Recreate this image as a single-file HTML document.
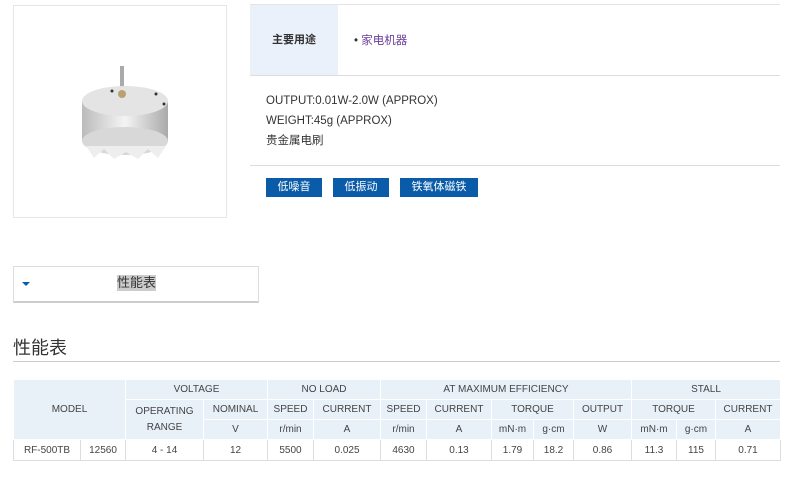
<!DOCTYPE html>
<html><head><meta charset="utf-8"><style>
*{margin:0;padding:0;box-sizing:border-box}
body{width:800px;height:490px;background:#fff;font-family:"Liberation Sans","Noto Sans CJK SC",sans-serif;color:#333;position:relative;overflow:hidden}
.a{position:absolute}
.imgbox{left:13px;top:5px;width:214px;height:213px;border:1px solid #e6e6e6}
.btn{position:absolute;top:178px;height:19px;background:#0a5ba8;color:#fff;font-size:11px;line-height:19px;text-align:center}
table{position:absolute;left:13px;top:379px;border-collapse:collapse;table-layout:fixed;font-size:10px;color:#444}
td{text-align:center;height:20px;border:1px solid #fff;background:#e8f0f8;padding:0}
tr.b td{background:#fff;border:1px solid #ddd;border-top:1px solid #fff;height:21px}
</style></head><body>
<div class="a imgbox">
<svg width="214" height="213" viewBox="0 0 214 213">
<defs><linearGradient id="g"><stop offset="0" stop-color="#bbb"/><stop offset=".5" stop-color="#f4f4f4"/><stop offset="1" stop-color="#aaa"/></linearGradient></defs>
<rect x="106" y="60" width="4" height="30" fill="#aaa"/>
<rect x="68" y="95" width="86" height="40" fill="url(#g)"/>
<ellipse cx="111" cy="135" rx="43" ry="14" fill="#d8d8d8"/>
<path d="M72 140 L80 152 L90 143 L100 153 L112 146 L124 153 L134 143 L144 152 L152 140 Z" fill="#eee"/>
<ellipse cx="111" cy="95" rx="43" ry="15" fill="#e4e4e4"/>
<circle cx="108" cy="88" r="4" fill="#b9a070"/>
<circle cx="98" cy="85" r="1.5" fill="#333"/><circle cx="142" cy="88" r="1.5" fill="#333"/><circle cx="150" cy="98" r="1.5" fill="#333"/>
</svg></div>
<div class="a" style="left:250px;top:4px;width:530px;border-top:1px solid #e4e4e4"></div>
<div class="a" style="left:250px;top:5px;width:88px;height:70px;background:#eaf1fa;font-size:11px;font-weight:bold;line-height:70px;text-align:center">主要用途</div>
<div class="a" style="left:354px;top:32px;font-size:11.5px;color:#6a3d9a"><span style="color:#333">•</span> 家电机器</div>
<div class="a" style="left:250px;top:75px;width:530px;border-top:1px solid #ddd"></div>
<div class="a" style="left:266px;top:91px;font-size:11.5px;line-height:20px">OUTPUT:0.01W-2.0W (APPROX)<br>WEIGHT:45g (APPROX)<br>贵金属电刷</div>
<div class="a" style="left:250px;top:165px;width:530px;border-top:1px solid #ddd"></div>
<div class="btn" style="left:266px;width:56px">低噪音</div>
<div class="btn" style="left:333px;width:56px">低振动</div>
<div class="btn" style="left:400px;width:78px">铁氧体磁铁</div>
<div class="a" style="left:13px;top:266px;width:246px;height:37px;border:1px solid #ddd;border-bottom:2px solid #ccc"></div>
<div class="a" style="left:22px;top:282px;width:0;height:0;border-left:4px solid transparent;border-right:4px solid transparent;border-top:4px solid #0a5ba8"></div>
<div class="a" style="left:117px;top:275px;font-size:13px;background:#ccc;line-height:16px">性能表</div>
<div class="a" style="left:13px;top:334px;font-size:18px;color:#333">性能表</div>
<div class="a" style="left:13px;top:361px;width:767px;border-top:1px solid #ccc"></div>
<table>
<colgroup><col style="width:67px"><col style="width:45px"><col style="width:78px"><col style="width:64px"><col style="width:46px"><col style="width:67px"><col style="width:46px"><col style="width:65px"><col style="width:42px"><col style="width:40px"><col style="width:58px"><col style="width:45px"><col style="width:39px"><col style="width:65px"></colgroup>
<tr><td colspan="2" rowspan="3">MODEL</td><td colspan="2">VOLTAGE</td><td colspan="2">NO LOAD</td><td colspan="5">AT MAXIMUM EFFICIENCY</td><td colspan="3">STALL</td></tr>
<tr><td rowspan="2" style="line-height:16px">OPERATING<br>RANGE</td><td>NOMINAL</td><td>SPEED</td><td>CURRENT</td><td>SPEED</td><td>CURRENT</td><td colspan="2">TORQUE</td><td>OUTPUT</td><td colspan="2">TORQUE</td><td>CURRENT</td></tr>
<tr><td>V</td><td>r/min</td><td>A</td><td>r/min</td><td>A</td><td>mN·m</td><td>g·cm</td><td>W</td><td>mN·m</td><td>g·cm</td><td>A</td></tr>
<tr class="b"><td>RF-500TB</td><td>12560</td><td>4 - 14</td><td>12</td><td>5500</td><td>0.025</td><td>4630</td><td>0.13</td><td>1.79</td><td>18.2</td><td>0.86</td><td>11.3</td><td>115</td><td>0.71</td></tr>
</table>
</body></html>
